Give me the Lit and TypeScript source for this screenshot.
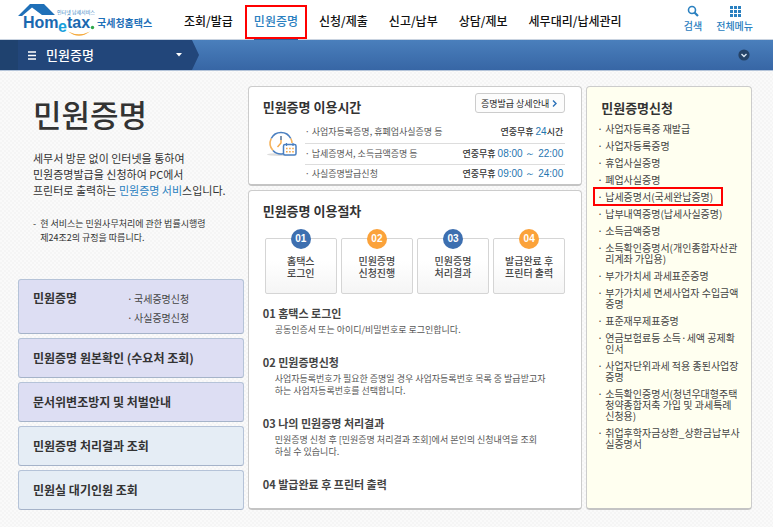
import { LitElement, html, css, svg } from "lit";
import { customElement } from "lit/decorators.js";
import { classMap } from "lit/directives/class-map.js";

const lines = (text: string[]) =>
  text.map((line, i) => (i ? html`<br />${line}` : html`${line}`));

const base = css`
  :host {
    display: block;
    font-family: "Noto Sans CJK KR", "Noto Sans", sans-serif;
    color: #333;
  }
  *,
  *::before,
  *::after {
    box-sizing: border-box;
  }
  a {
    color: inherit;
    text-decoration: none;
  }
  button {
    font-family: inherit;
    background: none;
    border: 0;
    padding: 0;
    cursor: pointer;
  }
  h1,
  h2,
  h3,
  p,
  ul,
  ol,
  li {
    margin: 0;
    padding: 0;
    list-style: none;
  }
`;

@customElement("site-header")
export class SiteHeader extends LitElement {
  static styles = [
    base,
    css`
      .header {
        display: flex;
        height: 40px;
        padding: 0 20px 0 18px;
        background: #fff;
        border-bottom: 1px solid #c9d3e0;
      }
      .logo {
        flex: 0 0 166px;
      }
      .logo svg {
        display: block;
      }
      .nav {
        display: flex;
        flex: 1;
        gap: 21px;
        font-size: 12px;
        line-height: 18px;
        font-weight: 500;
        color: #111;
        white-space: nowrap;
      }
      .link {
        position: relative;
        display: block;
        padding-top: 12px;
        height: 40px;
      }
      .active {
        color: #2a80c0;
        border-bottom: 2px solid #2d5f9e;
      }
      .active::after {
        content: "";
        position: absolute;
        inset: 5px -9px -1px -9px;
        border: 2px solid #f00;
      }
      .tools {
        display: flex;
        gap: 14px;
      }
      .tool {
        display: flex;
        flex-direction: column;
        align-items: center;
        gap: 2px;
        padding-top: 5px;
        font-size: 10px;
        line-height: 14px;
        font-weight: 500;
        color: #2a80c0;
        height: 36px;
      }
      .bar {
        display: flex;
        align-items: center;
        justify-content: space-between;
        height: 31px;
        padding-right: 23px;
        background: linear-gradient(#4a7fbc, #3766a5);
        border-bottom: 1px solid #b4c4d9;
      }
      .crumb {
        display: flex;
        align-items: center;
        width: 199px;
        height: 30px;
        padding: 0 17px 0 28px;
        color: #fff;
        font-size: 13px;
        line-height: 20px;
        font-weight: 500;
        background: linear-gradient(90deg, #1f426f 18px, #22467a 18px);
        clip-path: polygon(0 0, 192px 0, 100% 50%, 192px 100%, 0 100%);
      }
      .crumb span {
        flex: 1;
        text-align: left;
        padding-left: 9px;
      }
      .fold {
        display: flex;
      }
    `,
  ];

  private menu = ["조회/발급", "민원증명", "신청/제출", "신고/납부", "상담/제보", "세무대리/납세관리"];

  render() {
    const dots = [0, 4, 8];
    return html`
      <header class="header">
        <a class="logo" href="#" aria-label="국세청홈택스">
          <svg width="150" height="39" viewBox="18 0 150 39">
            <path d="M30 4 H44 L55 15 H42 L32 7.500 L22 16 H18 Z" fill="#1f70b8" />
            <text x="57" y="14" font-size="5" fill="#3b86c4">인터넷 납세서비스</text>
            <g font-family="'Liberation Sans',sans-serif" font-weight="700" font-size="16" fill="#1a68b0">
              <text x="23" y="28">Hom</text>
              <text x="58" y="32" fill="#18a0dc">e</text>
              <text x="67" y="28">tax</text>
            </g>
            <circle cx="92.500" cy="27.500" r="1.700" fill="#2fa84a" />
            <path d="M68 31.500 Q79 40 90 31.500 Q79 37 68 31.500Z" fill="#f5a93a" />
            <text x="97" y="27" font-size="10" font-weight="700" fill="#1f70b8">국세청홈택스</text>
          </svg>
        </a>
        <nav class="nav">
          ${this.menu.map(
            (m, i) => html`<a href="#" class=${classMap({ link: true, active: i === 1 })}>${m}</a>`
          )}
        </nav>
        <div class="tools">
          <button class="tool">
            <svg width="12" height="12" viewBox="0 0 12 12" fill="none" stroke="#2a80c0">
              <circle cx="5" cy="5" r="3.500" stroke-width="1.600" />
              <path d="M7.500 7.500 L11 11" stroke-width="2.200" />
            </svg>
            검색
          </button>
          <button class="tool">
            <svg width="12" height="12" viewBox="0 0 12 12" fill="#2a80c0">
              ${dots.map((y) => dots.map((x) => svg`<rect x=${x + 1} y=${y + 1} width="3" height="3" />`))}
            </svg>
            전체메뉴
          </button>
        </div>
      </header>
      <div class="bar">
        <button class="crumb">
          <svg width="9" height="9" viewBox="0 0 9 9" stroke="#fff">
            <path d="M0 1H8M0 4.500H8M0 8H8" stroke-width="1.500" />
          </svg>
          <span>민원증명</span>
          <svg width="6" height="4" viewBox="0 0 6 4"><path d="M0 0H6L3 3.500Z" fill="#fff" /></svg>
        </button>
        <button class="fold" aria-label="펼치기">
          <svg width="12" height="12" viewBox="0 0 12 12">
            <circle cx="6" cy="6" r="5.600" fill="#254368" />
            <path d="M3.500 5 L6 7.500 L8.500 5" fill="none" stroke="#dce8f5" stroke-width="1.400" />
          </svg>
        </button>
      </div>
    `;
  }
}

@customElement("intro-panel")
export class IntroPanel extends LitElement {
  static styles = [
    base,
    css`
      :host {
        display: flex;
        flex-direction: column;
        min-width: 0;
      }
      .intro {
        padding: 6px 0 24px 15px;
        white-space: nowrap;
      }
      .title {
        font-size: 31px;
        line-height: 44px;
        font-weight: 500;
      }
      .lead {
        margin-top: 14px;
        font-size: 11px;
        line-height: 16px;
      }
      .lead a {
        color: #2a80c0;
      }
      .note {
        display: flex;
        gap: 4px;
        margin-top: 19px;
        font-size: 9px;
        line-height: 14px;
      }
      .stack {
        display: flex;
        flex-direction: column;
        gap: 4px;
        margin-top: auto;
      }
      .item {
        display: flex;
        align-items: center;
        min-height: 40px;
        padding: 0 14px;
        font-size: 12px;
        line-height: 18px;
        font-weight: 700;
        background: #e5edf5;
        border: 1px solid #b5c3d8;
        border-bottom-color: #a5b3c9;
        border-radius: 3px;
      }
      .violet {
        background: #dddef3;
      }
      .wide {
        min-height: 55px;
        align-items: flex-start;
        padding-top: 9px;
      }
      .wide > a {
        flex: 0 0 94px;
      }
      .sub {
        font-size: 10px;
        line-height: 19px;
        font-weight: 400;
        color: #444;
      }
      .sub li::before {
        content: "·";
        display: inline-block;
        width: 7px;
      }
    `,
  ];

  render() {
    return html`
      <section class="intro">
        <h1 class="title">민원증명</h1>
        <p class="lead">
          세무서 방문 없이 인터넷을 통하여<br />민원증명발급을 신청하여 PC에서<br />프린터로 출력하는
          <a href="#">민원증명 서비</a>스입니다.
        </p>
        <p class="note">
          <span>-</span><span>현 서비스는 민원사무처리에 관한 법률시행령<br />제24조2의 규정을 따릅니다.</span>
        </p>
      </section>
      <nav class="stack">
        <div class="item violet wide">
          <a href="#">민원증명</a>
          <ul class="sub">
            <li><a href="#">국세증명신청</a></li>
            <li><a href="#">사실증명신청</a></li>
          </ul>
        </div>
        <a class="item violet" href="#">민원증명 원본확인 (수요처 조회)</a>
        <a class="item violet" href="#">문서위변조방지 및 처벌안내</a>
        <a class="item" href="#">민원증명 처리결과 조회</a>
        <a class="item" href="#">민원실 대기인원 조회</a>
      </nav>
    `;
  }
}

@customElement("guide-panel")
export class GuidePanel extends LitElement {
  static styles = [
    base,
    css`
      :host {
        display: flex;
        flex-direction: column;
        gap: 4px;
        min-width: 0;
      }
      .card {
        background: #fff;
        border: 1px solid #ccc;
        border-bottom: 2px solid #c4c4c4;
        border-radius: 4px;
        padding: 6px 16px 0 14px;
      }
      .steps-card {
        flex: 1;
        padding-top: 10px;
        padding-bottom: 16px;
      }
      .head {
        display: flex;
        justify-content: space-between;
        align-items: flex-start;
        height: 29px;
      }
      .title {
        font-size: 13px;
        line-height: 20px;
        font-weight: 700;
      }
      .head .title {
        padding-top: 4px;
      }
      .more {
        display: flex;
        align-items: center;
        gap: 3px;
        height: 20px;
        padding: 0 7px 0 5px;
        border: 1px solid #ccc;
        border-radius: 3px;
        background: #fcfcfc;
        font-size: 9px;
        color: #222;
      }
      .hours {
        display: flex;
        gap: 8px;
        padding-left: 4px;
      }
      .clock {
        flex: none;
        margin-top: 7px;
      }
      .table {
        flex: 1;
        border-collapse: collapse;
        font-size: 9px;
        line-height: 12px;
        color: #555;
        white-space: nowrap;
      }
      .table th,
      .table td {
        height: 21px;
        padding: 0;
        border-bottom: 1px solid #ddd;
      }
      .table tr:last-child > * {
        border-bottom: 0;
        height: 20px;
      }
      .table th {
        text-align: left;
        font-weight: 400;
      }
      .table th::before {
        content: "·";
        display: inline-block;
        width: 7px;
      }
      .table td {
        text-align: right;
        padding-right: 2px;
        font-weight: 500;
        color: #333;
      }
      .num {
        font-family: "Liberation Sans", sans-serif;
        font-size: 10px;
        color: #1f76b0;
      }
      .flow {
        display: grid;
        grid-template-columns: repeat(4, 1fr);
        gap: 4px;
        margin-top: 8px;
        padding-left: 2px;
      }
      .step {
        display: flex;
        flex-direction: column;
        align-items: center;
        text-align: center;
        font-size: 10px;
        line-height: 12px;
        font-weight: 500;
        color: #444;
        white-space: nowrap;
      }
      .badge {
        width: 20px;
        height: 20px;
        border-radius: 50%;
        background: #3d6fb0;
        color: #fff;
        font: 700 10px/20px "Liberation Sans", sans-serif;
        z-index: 1;
      }
      .orange {
        background: #fba23a;
      }
      .box {
        align-self: stretch;
        height: 56px;
        margin-top: -11px;
        padding-top: 16px;
        border: 1px solid #d5d5d5;
        border-radius: 2px;
        background: linear-gradient(#fff 40%, #f5f5f5);
      }
      .list {
        display: flex;
        flex-direction: column;
        gap: 18px;
        margin-top: 11px;
      }
      .name {
        font-size: 11px;
        line-height: 16px;
        font-weight: 700;
        color: #444;
      }
      .text {
        padding: 3px 0 0 12px;
        font-size: 9px;
        line-height: 12px;
        color: #555;
        white-space: nowrap;
      }
    `,
  ];

  private flow = [
    ["홈택스", "로그인"],
    ["민원증명", "신청진행"],
    ["민원증명", "처리결과"],
    ["발급완료 후", "프린터 출력"],
  ];

  private details: { name: string; text: string[] }[] = [
    { name: "01 홈택스 로그인", text: ["공동인증서 또는 아이디/비밀번호로 로그인합니다."] },
    {
      name: "02 민원증명신청",
      text: [
        "사업자등록번호가 필요한 증명일 경우 사업자등록번호 목록 중 발급받고자",
        "하는 사업자등록번호를 선택합니다.",
      ],
    },
    {
      name: "03 나의 민원증명 처리결과",
      text: ["민원증명 신청 후 [민원증명 처리결과 조회]에서 본인의 신청내역을 조회", "하실 수 있습니다."],
    },
    { name: "04 발급완료 후 프린터 출력", text: [] },
  ];

  render() {
    return html`
      <section class="card">
        <div class="head">
          <h2 class="title">민원증명 이용시간</h2>
          <button class="more">
            증명발급 상세안내
            <svg width="5" height="7" viewBox="0 0 5 7" fill="none" stroke="#2a70b8" stroke-width="1.400">
              <path d="M1 .5 L4 3.500 L1 6.500" />
            </svg>
          </button>
        </div>
        <div class="hours">
          <svg class="clock" width="30" height="30" viewBox="0 0 30 30" fill="none">
            <ellipse cx="13" cy="25.500" rx="13" ry="1.500" fill="#ddd" />
            <circle cx="14" cy="14" r="11" fill="#fff" />
            <path d="M4.200 9.500 A11 11 0 0 1 23.800 9.500" stroke="#4a7fc0" stroke-width="1.600" />
            <path d="M23.800 9.500 A11 11 0 0 1 25 14 M4.200 9.500 A11 11 0 0 0 6 21.500" stroke="#f5b35c" stroke-width="1.600" />
            <path d="M6 21.500 A11 11 0 0 0 16 24.800" stroke="#4a7fc0" stroke-width="1.600" />
            <path d="M14 7 V14 L10.500 18" stroke="#f5a94a" stroke-width="1.400" />
            <path d="M14 7 V11" stroke="#4a7fc0" stroke-width="1.400" />
            <rect x="16.500" y="15.500" width="12.500" height="10.500" rx="1.500" fill="#fff" stroke="#4a7fc0" stroke-width="1.500" />
            <path d="M19.500 14 V17 M26 14 V17" stroke="#4a7fc0" stroke-width="1.200" />
            <path d="M19 19.500 H27 M19 22.800 H27" stroke="#f5a94a" stroke-width="1.400" stroke-dasharray="1.600 1.500" />
          </svg>
          <table class="table">
            <tr>
              <th scope="row">사업자등록증명, 휴폐업사실증명 등</th>
              <td>연중무휴 <span class="num">24</span>시간</td>
            </tr>
            <tr>
              <th scope="row">납세증명서, 소득금액증명 등</th>
              <td>연중무휴 <span class="num">08:00 ～ 22:00</span></td>
            </tr>
            <tr>
              <th scope="row">사실증명발급신청</th>
              <td>연중무휴 <span class="num">09:00 ～ 24:00</span></td>
            </tr>
          </table>
        </div>
      </section>
      <section class="card steps-card">
        <h2 class="title">민원증명 이용절차</h2>
        <ol class="flow">
          ${this.flow.map(
            (step, i) => html`<li class="step">
              <span class=${classMap({ badge: true, orange: i % 2 === 1 })}>0${i + 1}</span>
              <div class="box">${lines(step)}</div>
            </li>`
          )}
        </ol>
        <ol class="list">
          ${this.details.map(
            (d) => html`<li>
              <h3 class="name">${d.name}</h3>
              ${d.text.length ? html`<p class="text">${lines(d.text)}</p>` : ""}
            </li>`
          )}
        </ol>
      </section>
    `;
  }
}

@customElement("apply-panel")
export class ApplyPanel extends LitElement {
  static styles = [
    base,
    css`
      :host {
        min-width: 0;
        padding: 11px 4px 12px 10px;
        background: #fffff0;
        border: 1px solid #ccc;
        border-bottom: 2px solid #c4c4c4;
        border-radius: 4px;
      }
      .title {
        padding-left: 4px;
        font-size: 13px;
        line-height: 20px;
        font-weight: 700;
      }
      .list {
        display: flex;
        flex-direction: column;
        gap: 6px;
        margin-top: 5px;
        font-size: 10px;
        line-height: 11px;
        color: #444;
        white-space: nowrap;
      }
      .row {
        position: relative;
        display: flex;
      }
      .row::before {
        content: "·";
        width: 8px;
      }
      .marked::after {
        content: "";
        position: absolute;
        left: -4px;
        top: -4px;
        width: 130px;
        height: 19px;
        border: 2px solid #f00;
      }
    `,
  ];

  private items = [
    ["사업자등록증 재발급"],
    ["사업자등록증명"],
    ["휴업사실증명"],
    ["폐업사실증명"],
    ["납세증명서(국세완납증명)"],
    ["납부내역증명(납세사실증명)"],
    ["소득금액증명"],
    ["소득확인증명서(개인종합자산관", "리계좌 가입용)"],
    ["부가가치세 과세표준증명"],
    ["부가가치세 면세사업자 수입금액", "증명"],
    ["표준재무제표증명"],
    ["연금보험료등 소득·세액 공제확", "인서"],
    ["사업자단위과세 적용 종된사업장", "증명"],
    ["소득확인증명서(청년우대형주택", "청약종합저축 가입 및 과세특례", "신청용)"],
    ["취업후학자금상환_상환금납부사", "실증명서"],
  ];

  render() {
    return html`
      <h2 class="title">민원증명신청</h2>
      <ul class="list">
        ${this.items.map(
          (item, i) => html`<li class=${classMap({ row: true, marked: i === 4 })}>
            <a href="#">${lines(item)}</a>
          </li>`
        )}
      </ul>
    `;
  }
}

@customElement("app-root")
export class AppRoot extends LitElement {
  static styles = [
    base,
    css`
      :host {
        min-height: 100vh;
        background: repeating-conic-gradient(#f5f5f5 0 25%, #fafafa 0 50%) 0 0 / 4px 4px;
      }
      .content {
        display: grid;
        grid-template-columns: minmax(0, 226fr) minmax(0, 335fr) minmax(0, 166fr);
        gap: 4px;
        padding: 15px 21px 16px 18px;
      }
    `,
  ];

  render() {
    return html`
      <site-header></site-header>
      <main class="content">
        <intro-panel></intro-panel>
        <guide-panel></guide-panel>
        <apply-panel></apply-panel>
      </main>
    `;
  }
}
